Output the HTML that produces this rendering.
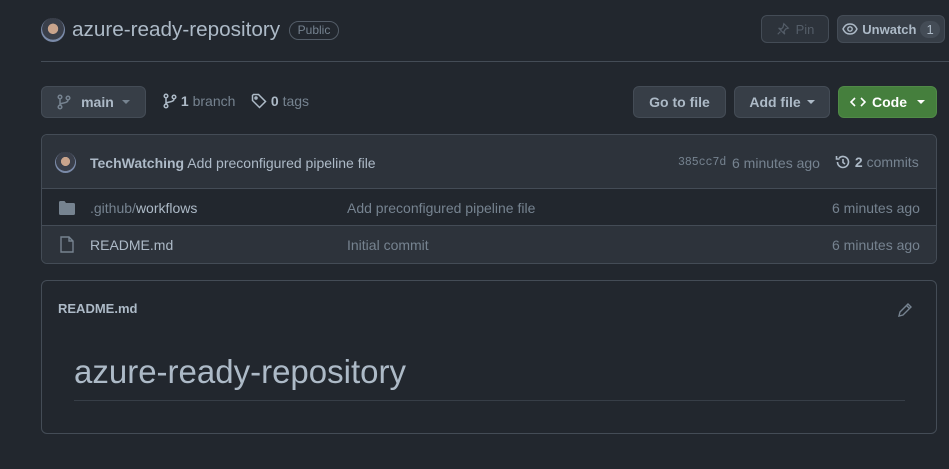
<!DOCTYPE html>
<html><head><meta charset="utf-8"><style>
*{box-sizing:border-box;margin:0;padding:0}
body{width:949px;height:469px;background:#22272e;font-family:"Liberation Sans",sans-serif;color:#adbac7;position:relative;overflow:hidden;font-size:14px}
.a{position:absolute}
.btn{position:absolute;background:#373e47;border:1px solid #444c56;border-radius:6px;color:#adbac7;font-weight:bold;font-size:14px;display:flex;align-items:center;justify-content:center;gap:6px}
.av{border-radius:50%;background:radial-gradient(circle at 50% 45%,#c9a48c 0 28%,#3a3f4a 30% 60%,#7a8aa8 62%);}
.muted{color:#768390}
.caret{display:inline-block;width:0;height:0;border-left:4px solid transparent;border-right:4px solid transparent;border-top:4px solid currentColor}
</style></head><body>
<div class="a av" style="left:41px;top:18px;width:24px;height:24px"></div>
<div class="a" style="left:72px;top:18px;font-size:20.7px;color:#adbac7">azure-ready-repository</div>
<div class="a" style="left:289px;top:21px;height:19px;width:50px;border:1px solid #545d68;border-radius:10px;font-size:12px;color:#768390;text-align:center;line-height:17px">Public</div>
<div class="btn" style="left:761px;top:15px;width:68px;height:28px;color:#545d68;font-weight:normal;font-size:13px;background:#2d333b"><svg width="14" height="14" viewBox="0 0 16 16" fill="none" stroke="#545d68" stroke-width="1.4"><path d="M9 2l5 5-3 1-2 3 1 3-7-7 3 1 2-2z M5 11l-3 3"/></svg>Pin</div>
<div class="btn" style="left:837px;top:15px;width:108px;height:28px;font-size:13px;gap:4px"><svg width="16" height="14" viewBox="0 0 16 14" fill="none" stroke="#adbac7" stroke-width="1.4"><path d="M1 7c2-4 4-5 7-5s5 1 7 5c-2 4-4 5-7 5S3 11 1 7z"/><circle cx="8" cy="7" r="2.2"/></svg>Unwatch <span style="background:#444c56;border-radius:10px;padding:1px 6px;font-weight:normal">1</span></div>
<div class="a" style="left:41px;top:61px;width:908px;height:1px;background:#444c56"></div>
<div class="btn" style="left:41px;top:86px;width:105px;height:32px"><svg width="14" height="16" viewBox="0 0 14 16" fill="none" stroke="#768390" stroke-width="1.5"><circle cx="3" cy="3" r="1.8"/><circle cx="3" cy="13" r="1.8"/><circle cx="11" cy="4" r="1.8"/><path d="M3 5v6M11 6c0 4-8 2-8 5"/></svg>&nbsp;main <span class="caret muted" style="margin-left:2px"></span></div>
<div class="a" style="left:163px;top:93px;font-size:14px"><svg width="14" height="16" viewBox="0 0 14 16" fill="none" stroke="#adbac7" stroke-width="1.5" style="vertical-align:-3px"><circle cx="3" cy="3" r="1.8"/><circle cx="3" cy="13" r="1.8"/><circle cx="11" cy="4" r="1.8"/><path d="M3 5v6M11 6c0 4-8 2-8 5"/></svg> <b>1</b> <span class="muted">branch</span></div>
<div class="a" style="left:251px;top:93px;font-size:14px"><svg width="16" height="16" viewBox="0 0 16 16" fill="none" stroke="#adbac7" stroke-width="1.5" style="vertical-align:-3px"><path d="M1.5 2.5v5l7 7 6-6-7-7h-5z"/><circle cx="5" cy="5" r="1"/></svg> <b>0</b> <span class="muted">tags</span></div>
<div class="btn" style="left:633px;top:86px;width:93px;height:32px">Go to file</div>
<div class="btn" style="left:734px;top:86px;width:96px;height:32px">Add file <span class="caret"></span></div>
<div class="btn" style="left:838px;top:86px;width:99px;height:32px;background:#457f3d;border-color:#508a47;color:#fff"><svg width="16" height="12" viewBox="0 0 16 12" fill="none" stroke="#fff" stroke-width="1.6"><path d="M5 2L1 6l4 4M11 2l4 4-4 4"/></svg>Code <span class="caret" style="margin-left:4px"></span></div>

<div class="a" style="left:41px;top:134px;width:896px;height:130px;border:1px solid #444c56;border-radius:6px;overflow:hidden">
 <div style="height:54px;background:#2d333b;border-bottom:1px solid #444c56;position:relative">
  <div class="a av" style="left:13px;top:17px;width:21px;height:21px"></div>
  <div class="a" style="left:48px;top:20px"><b>TechWatching</b> Add preconfigured pipeline file</div>
  <div class="a muted" style="left:636px;top:21px;font-family:'Liberation Mono',monospace;font-size:11.5px">385cc7d</div>
  <div class="a muted" style="left:690px;top:20px">6 minutes ago</div>
  <div class="a" style="left:793px;top:19px"><svg width="16" height="16" viewBox="0 0 16 16" fill="none" stroke="#adbac7" stroke-width="1.6" style="vertical-align:-3px"><path d="M2.5 8a5.5 5.5 0 1 0 1.6-3.9M1.5 2v3h3M8 5v3.5l2 1.5"/></svg> <b>2</b> <span class="muted">commits</span></div>
 </div>
 <div style="height:37px;background:#22272e;border-bottom:1px solid #444c56;position:relative">
  <svg class="a" style="left:17px;top:12px" width="16" height="14" viewBox="0 0 16 14"><path d="M0 1.5A1.5 1.5 0 0 1 1.5 0h4l1.5 2h7.5A1.5 1.5 0 0 1 16 3.5v9a1.5 1.5 0 0 1-1.5 1.5h-13A1.5 1.5 0 0 1 0 12.5z" fill="#768390"/></svg>
  <div class="a" style="left:48px;top:11px"><span class="muted">.github/</span>workflows</div>
  <div class="a muted" style="left:305px;top:11px">Add preconfigured pipeline file</div>
  <div class="a muted" style="left:790px;top:11px">6 minutes ago</div>
 </div>
 <div style="height:37px;background:#2d333b;position:relative">
  <svg class="a" style="left:18px;top:10px" width="14" height="17" viewBox="0 0 14 17" fill="none" stroke="#768390" stroke-width="1.4"><path d="M1 1h8l4 4v11H1z M9 1v4h4"/></svg>
  <div class="a" style="left:48px;top:11px">README.md</div>
  <div class="a muted" style="left:305px;top:11px">Initial commit</div>
  <div class="a muted" style="left:790px;top:11px">6 minutes ago</div>
 </div>
</div>

<div class="a" style="left:41px;top:280px;width:896px;height:154px;border:1px solid #444c56;border-radius:6px">
 <div class="a" style="left:16px;top:20px;font-weight:bold;font-size:13px">README.md</div>
 <svg class="a" style="left:855px;top:21px" width="16" height="16" viewBox="0 0 16 16" fill="none" stroke="#768390" stroke-width="1.4"><path d="M11 2l3 3-8 8-4 1 1-4z M9.5 3.5l3 3"/></svg>
 <div class="a" style="left:32px;top:72px;font-size:33px;color:#adbac7">azure-ready-repository</div>
 <div class="a" style="left:32px;top:119px;width:831px;height:1px;background:#373e47"></div>
</div>
</body></html>
